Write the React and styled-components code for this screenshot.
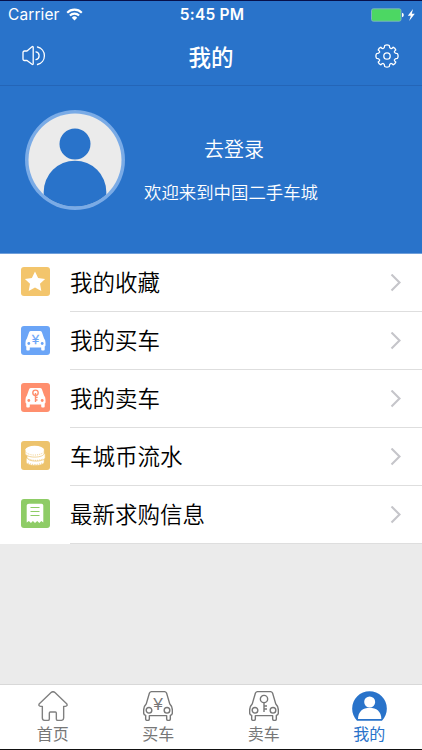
import styled, { createGlobalStyle } from "styled-components";

const GlobalStyle = createGlobalStyle`
  * {
    box-sizing: border-box;
  }
  body {
    margin: 0;
    background: #ebebeb;
    font-family: "Noto Sans CJK SC", sans-serif;
  }
`;

const StarIcon = () => (
  <svg width="28" height="28" viewBox="0 0 28 28">
    <path
      d="M14 4.6l3.1 6.4 7 .9-5.1 4.9 1.3 7.2-6.3-3.5-6.3 3.5L9 16.8l-5.1-4.9 7-.9z"
      fill="#fff"
    />
  </svg>
);

const CarBadgeIcon = ({ color, sell }) => (
  <svg width="28" height="28" viewBox="0 0 28 28">
    <path
      d="M10 5h9q1.400 0 1.900 1.200l2.200 6.300q1.400 1.600 1.400 4.300v2.400q0 1-.8 1.400v3q0 1-1 1h-1.500q-1 0-1-1v-2.200H8.800v2.200q0 1-1 1H6.300q-1 0-1-1v-3q-.8-.4-.8-1.400v-2.400q0-2.700 1.400-4.300l2.200-6.300Q8.600 5 10 5z"
      fill="#fff"
    />
    <circle cx="7.800" cy="17.500" r="1.400" fill={color} />
    <circle cx="21.200" cy="17.500" r="1.400" fill={color} />
    {sell ? (
      <g fill="none" stroke={color} strokeWidth="1.400">
        <circle cx="14.500" cy="9.800" r="2.700" />
        <path d="M14.500 10v9M14.500 14.400h2.200M14.500 17h2" />
      </g>
    ) : (
      <text
        x="14.500"
        y="17.600"
        fill={color}
        stroke={color}
        strokeWidth=".3"
        fontSize="12.500"
        fontFamily="Liberation Sans, sans-serif"
        textAnchor="middle"
      >
        ¥
      </text>
    )}
  </svg>
);

const CoinsIcon = () => (
  <svg width="28" height="28" viewBox="0 0 28 28">
    <g fill="#fff" stroke="#edc36c" strokeWidth=".7">
      <path d="M5.200 17v4c0 2 4 3.600 9 3.600s9-1.600 9-3.600v-4z" />
      <path d="M6 12.500v4c0 2 4 3.600 9 3.600s9.200-1.600 9.200-3.600v-4z" />
      <path d="M4.200 8.600v3.800c0 2 4.200 3.700 9.600 3.700s9.400-1.700 9.400-3.700V8.600z" />
    </g>
    <ellipse cx="13.700" cy="8.500" rx="9.300" ry="3.700" fill="#fff" />
    <g fill="none" stroke="#edc36c" strokeWidth=".8" strokeDasharray="1 1.200">
      <path d="M5.500 11.800c4 3 12 3 16.500 0" />
      <path d="M7.500 17.700c4 2.200 10.500 2.200 15 0" />
      <path d="M7 22c4 2 10 2 14 0" />
    </g>
  </svg>
);

const ReceiptIcon = () => (
  <svg width="28" height="28" viewBox="0 0 28 28">
    <path
      d="M8 4.800h12.500q1.800 0 1.800 1.800v17l-2-1.500-2 1.900-2.100-1.900-2.200 1.900-2.100-1.900-2 1.900-2-1.900-2.200 1.500v-17Q5.700 4.800 8 4.800z"
      fill="#fff"
    />
    <path
      d="M9.500 8.500h9M9.500 12.500h9M9.500 16.500h9"
      stroke="#8ecc66"
      strokeWidth="1.200"
    />
  </svg>
);

const HomeIcon = () => (
  <svg width="30" height="30" viewBox="0 0 90 90">
    <path
      d="M40 4Q45 0 50 4L86 38Q90 45 82 46H77V81Q77 88 70 88H59Q55 88 55 84V66Q55 63 52 63H37Q34 63 34 66V84Q34 88 30 88H20Q13 88 13 81V46H8Q0 45 4 38Z"
      fill="none"
      stroke="#808080"
      strokeWidth="4.200"
      strokeLinejoin="round"
    />
  </svg>
);

const CarIcon = ({ sell }) => (
  <svg width="30" height="30" viewBox="0 0 90 90">
    <g fill="none" stroke="#777" strokeWidth="4.200" strokeLinejoin="round">
      <path d="M26 2H64Q69 2 71 7L80 38Q88 46 88 57V66Q88 72 82 73V84Q82 88 78 88H75Q71 88 71 84V74H19V84Q19 88 15 88H12Q8 88 8 84V73Q2 72 2 66V57Q2 46 10 38L19 7Q21 2 26 2Z" />
      <circle cx="18" cy="58" r="8.500" />
      <circle cx="72" cy="58" r="8.500" />
      {sell && (
        <>
          <circle cx="45" cy="24" r="11" />
          <path d="M45 35V63M45 45H54M45 54H54" />
        </>
      )}
    </g>
    {!sell && (
      <text
        x="45"
        y="58"
        fill="#777"
        fontSize="52"
        fontFamily="Liberation Sans, sans-serif"
        textAnchor="middle"
      >
        ¥
      </text>
    )}
  </svg>
);

const MineIcon = () => (
  <svg width="35" height="30" viewBox="0 0 105 90">
    <path d="M15 89A52 52 0 1 1 90 89Z" fill="#2973ca" />
    <circle cx="53" cy="33" r="16.500" fill="#fff" />
    <path d="M18 84C18 61 33 50 53 50S88 61 88 84Z" fill="#fff" />
  </svg>
);

const rows = [
  { label: "我的收藏", color: "#f3c56c", icon: <StarIcon /> },
  {
    label: "我的买车",
    color: "#6ba5f7",
    icon: <CarBadgeIcon color="#6ba5f7" />,
    drop: 1,
  },
  {
    label: "我的卖车",
    color: "#ff8f6e",
    icon: <CarBadgeIcon color="#ff8f6e" sell />,
  },
  { label: "车城币流水", color: "#edc36c", icon: <CoinsIcon /> },
  { label: "最新求购信息", color: "#8ecc66", icon: <ReceiptIcon /> },
];

const tabs = [
  { label: "首页", icon: <HomeIcon /> },
  { label: "买车", icon: <CarIcon /> },
  { label: "卖车", icon: <CarIcon sell /> },
  { label: "我的", icon: <MineIcon />, active: true },
];

function App() {
  return (
    <Screen>
      <GlobalStyle />
      <StatusBar>
        <Carrier>
          Carrier
          <svg width="17" height="13" viewBox="0 0 17 13">
            <g fill="none" stroke="#fff" strokeWidth="2.100">
              <path d="M1.200 4.700a10.300 10.300 0 0 1 14.600 0" />
              <path d="M3.900 7.500a6.500 6.500 0 0 1 9.200 0" />
            </g>
            <path d="M8.500 12.500L5.800 9.700a3.800 3.800 0 0 1 5.400 0z" fill="#fff" />
          </svg>
        </Carrier>
        <Clock>5:45 PM</Clock>
        <Power>
          <svg width="45" height="14" viewBox="0 0 45 14">
            <rect
              x=".5"
              y=".8"
              width="29.500"
              height="12.400"
              rx="1.800"
              fill="#4cd763"
              stroke="#80b5c5"
              strokeWidth=".9"
            />
            <path d="M31 4.700q1.800.4 1.800 2.300T31 9.300z" fill="#fff" />
            <path d="M42 1l-5.200 6.800h3L38.200 13l5.600-7.200h-3z" fill="#fff" />
          </svg>
        </Power>
      </StatusBar>

      <NavBar>
        <NavButton>
          <svg width="26" height="22" viewBox="0 0 26 22">
            <g
              fill="none"
              stroke="#fff"
              strokeWidth="1.300"
              strokeLinejoin="round"
            >
              <path d="M2 7.500Q2 6 3.500 6H6L11 1.700Q12.200 1 12.200 2.300V18.700Q12.200 20 11 19.300L6 15.500H3.500Q2 15.500 2 14Z" />
              <path d="M15 6.800a4 4 0 0 1 0 7.800" strokeLinecap="round" />
              <path d="M16.500 2a9 9 0 0 1 0 17.500" strokeLinecap="round" />
            </g>
          </svg>
        </NavButton>
        <Title>我的</Title>
        <NavButton>
          <svg width="24" height="24" viewBox="0 0 24 24">
            <g
              fill="none"
              stroke="#fff"
              strokeWidth="1.300"
              strokeLinejoin="round"
            >
              <path d="M9.700 1.500Q12 .3 14.300 1.500Q14.300 4.200 16 4.700Q17.200 4.700 18 3.200Q20.200 4 20.800 6Q19.300 7 19.300 8Q20 9.700 22.500 9.700Q23.700 12 22.500 14.300Q20 14.300 19.300 16Q19.300 17 20.800 18Q20.200 20 18 20.800Q17.200 19.300 16 19.300Q14.300 19.800 14.300 22.500Q12 23.700 9.700 22.500Q9.700 19.800 8 19.300Q6.800 19.300 6 20.800Q3.800 20 3.200 18Q4.700 17 4.700 16Q4 14.300 1.500 14.300Q.3 12 1.500 9.700Q4 9.700 4.700 8Q4.700 7 3.200 6Q3.800 4 6 3.200Q6.800 4.700 8 4.700Q9.700 4.200 9.700 1.500Z" />
              <circle cx="12" cy="12" r="3.200" />
            </g>
          </svg>
        </NavButton>
      </NavBar>

      <Profile>
        <svg width="100" height="100" viewBox="0 0 100 100">
          <clipPath id="avatar">
            <circle cx="50" cy="50" r="46.500" />
          </clipPath>
          <circle cx="50" cy="50" r="50" fill="#7aabe6" />
          <circle cx="50" cy="50" r="46.500" fill="#ebebeb" />
          <circle cx="50" cy="34" r="15.500" fill="#2973ca" />
          <path
            d="M18.700 100V82a31.300 31.300 0 0 1 62.600 0v18z"
            fill="#2973ca"
            clipPath="url(#avatar)"
          />
        </svg>
        <Greeting>
          <LoginLink>去登录</LoginLink>
          <Welcome>欢迎来到中国二手车城</Welcome>
        </Greeting>
      </Profile>

      <Menu>
        {rows.map((row) => (
          <Row key={row.label}>
            <Badge $color={row.color} $drop={row.drop}>
              {row.icon}
            </Badge>
            <RowBody>
              <RowLabel>{row.label}</RowLabel>
              <svg width="12" height="18" viewBox="0 0 12 18">
                <path
                  d="M1.500 .5l8 8-8 8"
                  fill="none"
                  stroke="#c5c5ca"
                  strokeWidth="2.100"
                />
              </svg>
            </RowBody>
          </Row>
        ))}
      </Menu>

      <TabBar>
        {tabs.map((tab) => (
          <Tab key={tab.label} $active={tab.active}>
            {tab.icon}
            <span>{tab.label}</span>
          </Tab>
        ))}
      </TabBar>
    </Screen>
  );
}

export default App;

const Screen = styled.div`
  display: flex;
  flex-direction: column;
  width: 422px;
  height: 750px;
  background: #ebebeb;
  border-top: 1px solid #07104a;
  border-bottom: 1px solid #111;
  overflow: hidden;
`;

const StatusBar = styled.div`
  display: grid;
  grid-template-columns: 1fr auto 1fr;
  align-items: center;
  height: 27px;
  padding: 0 6px 0 8px;
  background: #2973ca;
  color: #fff;
  font-family: Inter, sans-serif;
  font-size: 15.5px;
`;

const Carrier = styled.div`
  display: flex;
  align-items: center;
  gap: 6px;
  letter-spacing: 0.1px;
`;

const Clock = styled.div`
  font-weight: 600;
  letter-spacing: 0.2px;
`;

const Power = styled.div`
  display: flex;
  justify-content: flex-end;
`;

const NavBar = styled.div`
  display: flex;
  align-items: center;
  justify-content: space-between;
  height: 58px;
  padding: 0 23px 2px 21px;
  background: #2973ca;
  border-bottom: 1px solid #2465b7;
`;

const NavButton = styled.button`
  display: flex;
  padding: 0;
  border: none;
  background: none;
`;

const Title = styled.h1`
  margin: 0;
  color: #fff;
  font-size: 22.5px;
  font-weight: 500;
  line-height: 30px;
`;

const Profile = styled.div`
  display: flex;
  height: 167px;
  padding: 24px 0 0 25px;
  background: #2973ca;
  color: #fff;
  font-weight: 350;
`;

const Greeting = styled.div`
  display: flex;
  flex-direction: column;
  align-items: center;
  gap: 17px;
  width: 180px;
  margin: 25px 0 0 16px;
`;

const LoginLink = styled.div`
  font-size: 20px;
  line-height: 28px;
  margin-left: 6px;
`;

const Welcome = styled.div`
  font-size: 17.4px;
  line-height: 24px;
`;

const Menu = styled.div`
  display: flex;
  flex-direction: column;
  background: #fff;
  border-top: 1px solid #6f9fda;
`;

const Row = styled.div`
  display: flex;
  align-items: center;
  height: 58px;
  padding-left: 21px;
`;

const Badge = styled.div`
  display: flex;
  width: 29px;
  height: 29px;
  margin-bottom: ${({ $drop }) => ($drop ? 1 : 3)}px;
  border-radius: 3px;
  background: ${({ $color }) => $color};
`;

const RowBody = styled.div`
  display: flex;
  flex: 1;
  align-items: center;
  justify-content: space-between;
  height: 58px;
  margin-left: 20px;
  padding-right: 20px;
  border-bottom: 1px solid #dedede;
`;

const RowLabel = styled.div`
  padding-bottom: 3px;
  color: #000;
  font-size: 22.5px;
  font-weight: 350;
  line-height: 30px;
`;

const TabBar = styled.div`
  display: grid;
  grid-template-columns: repeat(4, 1fr);
  height: 65px;
  margin-top: auto;
  background: #fff;
  border-top: 1px solid #d8d8d8;
`;

const Tab = styled.div`
  display: flex;
  flex-direction: column;
  align-items: center;
  padding-top: 6px;
  color: ${({ $active }) => ($active ? "#2973ca" : "#777")};
  font-size: 16px;
  line-height: 24px;
`;
